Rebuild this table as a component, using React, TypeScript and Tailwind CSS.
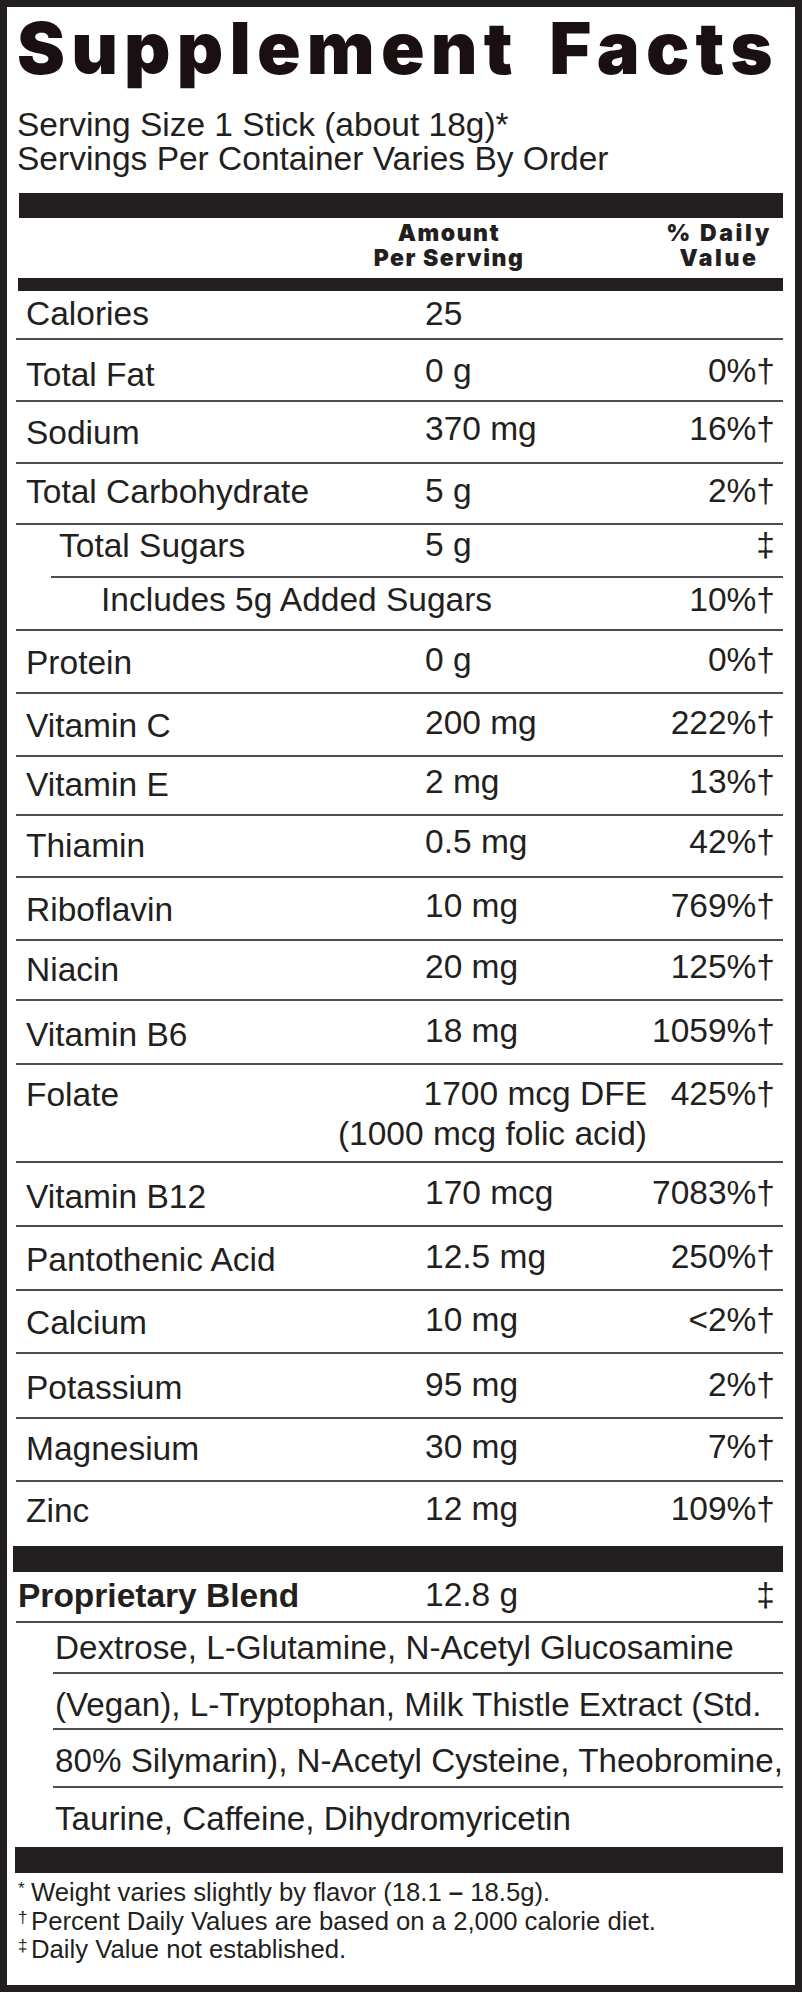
import React from 'react';

type Row = {
  label: string;
  amount: string;
  dv: string;
  h: string;
  pt: string;
  vpt: string;
  indent?: boolean;
  sub?: boolean;
  last?: boolean;
};

const rows: Row[] = [
  { label: 'Calories', amount: '25', dv: '', h: 'h-[49px]', pt: 'pt-[7px]', vpt: 'pt-[7px]' },
  { label: 'Total Fat', amount: '0 g', dv: '0%†', h: 'h-[62px]', pt: 'pt-[19px]', vpt: 'pt-[15px]' },
  { label: 'Sodium', amount: '370 mg', dv: '16%†', h: 'h-[62px]', pt: 'pt-[15px]', vpt: 'pt-[11px]' },
  { label: 'Total Carbohydrate', amount: '5 g', dv: '2%†', h: 'h-[61px]', pt: 'pt-[12px]', vpt: 'pt-[11px]' },
  { label: 'Total Sugars', amount: '5 g', dv: '‡', h: 'h-[53px]', pt: 'pt-[5px]', vpt: 'pt-[4px]', indent: true },
  { label: 'Includes 5g Added Sugars', amount: '', dv: '10%†', h: 'h-[53px]', pt: 'pt-[6px]', vpt: 'pt-[6px]', sub: true },
  { label: 'Protein', amount: '0 g', dv: '0%†', h: 'h-[63px]', pt: 'pt-[16px]', vpt: 'pt-[13px]' },
  { label: 'Vitamin C', amount: '200 mg', dv: '222%†', h: 'h-[63px]', pt: 'pt-[16px]', vpt: 'pt-[13px]' },
  { label: 'Vitamin E', amount: '2 mg', dv: '13%†', h: 'h-[59px]', pt: 'pt-[12px]', vpt: 'pt-[9px]' },
  { label: 'Thiamin', amount: '0.5 mg', dv: '42%†', h: 'h-[62px]', pt: 'pt-[14px]', vpt: 'pt-[10px]' },
  { label: 'Riboflavin', amount: '10 mg', dv: '769%†', h: 'h-[63px]', pt: 'pt-[16px]', vpt: 'pt-[12px]' },
  { label: 'Niacin', amount: '20 mg', dv: '125%†', h: 'h-[60px]', pt: 'pt-[13px]', vpt: 'pt-[10px]' },
  { label: 'Vitamin B6', amount: '18 mg', dv: '1059%†', h: 'h-[64px]', pt: 'pt-[18px]', vpt: 'pt-[14px]' },
  { label: 'Folate', amount: '1700 mcg DFE', dv: '425%†', h: 'h-[98px]', pt: 'pt-[14px]', vpt: 'pt-[13px]' },
  { label: 'Vitamin B12', amount: '170 mcg', dv: '7083%†', h: 'h-[64px]', pt: 'pt-[18px]', vpt: 'pt-[14px]' },
  { label: 'Pantothenic Acid', amount: '12.5 mg', dv: '250%†', h: 'h-[64px]', pt: 'pt-[17px]', vpt: 'pt-[14px]' },
  { label: 'Calcium', amount: '10 mg', dv: '<2%†', h: 'h-[63px]', pt: 'pt-[16px]', vpt: 'pt-[13px]' },
  { label: 'Potassium', amount: '95 mg', dv: '2%†', h: 'h-[65px]', pt: 'pt-[18px]', vpt: 'pt-[15px]' },
  { label: 'Magnesium', amount: '30 mg', dv: '7%†', h: 'h-[63px]', pt: 'pt-[14px]', vpt: 'pt-[12px]' },
  { label: 'Zinc', amount: '12 mg', dv: '109%†', h: 'h-[64px]', pt: 'pt-[13px]', vpt: 'pt-[11px]', last: true },
];

const blendLines = [
  { text: 'Dextrose, L-Glutamine, N-Acetyl Glucosamine', h: 'h-[51px]', pt: 'pt-[9px]' },
  { text: '(Vegan), L-Tryptophan, Milk Thistle Extract (Std.', h: 'h-[56px]', pt: 'pt-[15px]' },
  { text: '80% Silymarin), N-Acetyl Cysteine, Theobromine,', h: 'h-[58px]', pt: 'pt-[15px]' },
  { text: 'Taurine, Caffeine, Dihydromyricetin', h: 'h-[59px]', pt: 'pt-[15px]' },
];

const FactRow: React.FC<{ row: Row }> = ({ row }) => {
  const border = row.last ? '' : 'border-b-2 border-[#4d4d4f]';
  let labelCls = 'w-[409px] pl-[10px]';
  if (row.indent) labelCls = 'w-[374px] pl-[8px]';
  if (row.sub) labelCls = 'w-[409px] pl-[85px]';

  return (
    <div className={`flex ${row.h} ${border} ${row.indent ? 'ml-[35px]' : ''} pr-[8px]`}>
      <div className={`${labelCls} shrink-0 whitespace-nowrap ${row.pt}`}>{row.label}</div>
      <div className={`flex-1 whitespace-nowrap ${row.vpt}`}>
        {row.label === 'Folate' ? (
          <div className="flex w-[222px] flex-col items-end">
            <span className="whitespace-nowrap">{row.amount}</span>
            <span className="mt-[8px] whitespace-nowrap">(1000 mcg folic acid)</span>
          </div>
        ) : (
          row.amount
        )}
      </div>
      <div className={`text-right whitespace-nowrap ${row.vpt}`}>{row.dv}</div>
    </div>
  );
};

export default function App() {
  return (
    <div className="h-[1992px] w-[802px] border-[7px] border-[#231f20] bg-white pl-[9px] pr-[12px] text-[#231f20] font-['Liberation_Sans',Arial,sans-serif]">
      <h1 className="pt-[5px] pl-[1px] text-[72px] leading-[72px] font-black tracking-[6.2px] [word-spacing:10px] whitespace-nowrap text-[#1a1011] font-['Inter','Liberation_Sans',sans-serif]">
        Supplement Facts
      </h1>
      <div className="mt-[24px] pl-[1px] text-[33.5px] leading-[34px]">
        <p>Serving Size 1 Stick (about 18g)*</p>
        <p>Servings Per Container Varies By Order</p>
      </div>

      <div className="mt-[17px] ml-[3px] h-[25px] bg-[#231f20]" />
      <div className="mt-[3px] flex text-[23px] leading-[25px] font-black whitespace-nowrap font-['Inter','Liberation_Sans',sans-serif]">
        <div className="ml-[323px] w-[220px] shrink-0 text-center tracking-[1.5px]">
          <p>Amount</p>
          <p>Per Serving</p>
        </div>
        <div className="ml-[100px] w-[120px] shrink-0 text-center tracking-[2.6px]">
          <p>% Daily</p>
          <p>Value</p>
        </div>
      </div>
      <div className="mt-[7px] ml-[2px] h-[13px] bg-[#231f20]" />

      <div className="text-[33.5px] leading-[32px]">
        {rows.map((row) => (
          <FactRow key={row.label} row={row} />
        ))}
      </div>

      <div className="-ml-[3px] h-[26px] bg-[#231f20]" />

      <div className="text-[33.5px] leading-[32px]">
        <div className="flex h-[51px] border-b-2 border-[#4d4d4f] pr-[8px]">
          <div className="w-[409px] shrink-0 pl-[2px] pt-[8px] font-bold">Proprietary Blend</div>
          <div className="flex-1 pt-[7px]">12.8 g</div>
          <div className="pt-[7px] text-right">‡</div>
        </div>
        {blendLines.map((line, i) => (
          <div
            key={line.text}
            className={`ml-[37px] ${line.h} ${line.pt} pl-[2px] text-[33.2px] whitespace-nowrap ${
              i < blendLines.length - 1 ? 'border-b-2 border-[#4d4d4f]' : ''
            }`}
          >
            {line.text}
          </div>
        ))}
      </div>

      <div className="-ml-[1px] h-[26px] bg-[#231f20]" />

      <div className="mt-[5px] pl-[2px] text-[25.7px] leading-[28.5px]">
        <p className="flex">
          <span className="w-[13px] pt-[2px] text-[17px] leading-none">*</span>
          <span>
            Weight varies slightly by flavor (18.1 <span className="font-bold">–</span> 18.5g).
          </span>
        </p>
        <p className="flex">
          <span className="w-[13px] pt-[2px] text-[17px] leading-none">†</span>
          Percent Daily Values are based on a 2,000 calorie diet.
        </p>
        <p className="flex">
          <span className="w-[13px] pt-[2px] text-[17px] leading-none">‡</span>
          Daily Value not established.
        </p>
      </div>
    </div>
  );
}
